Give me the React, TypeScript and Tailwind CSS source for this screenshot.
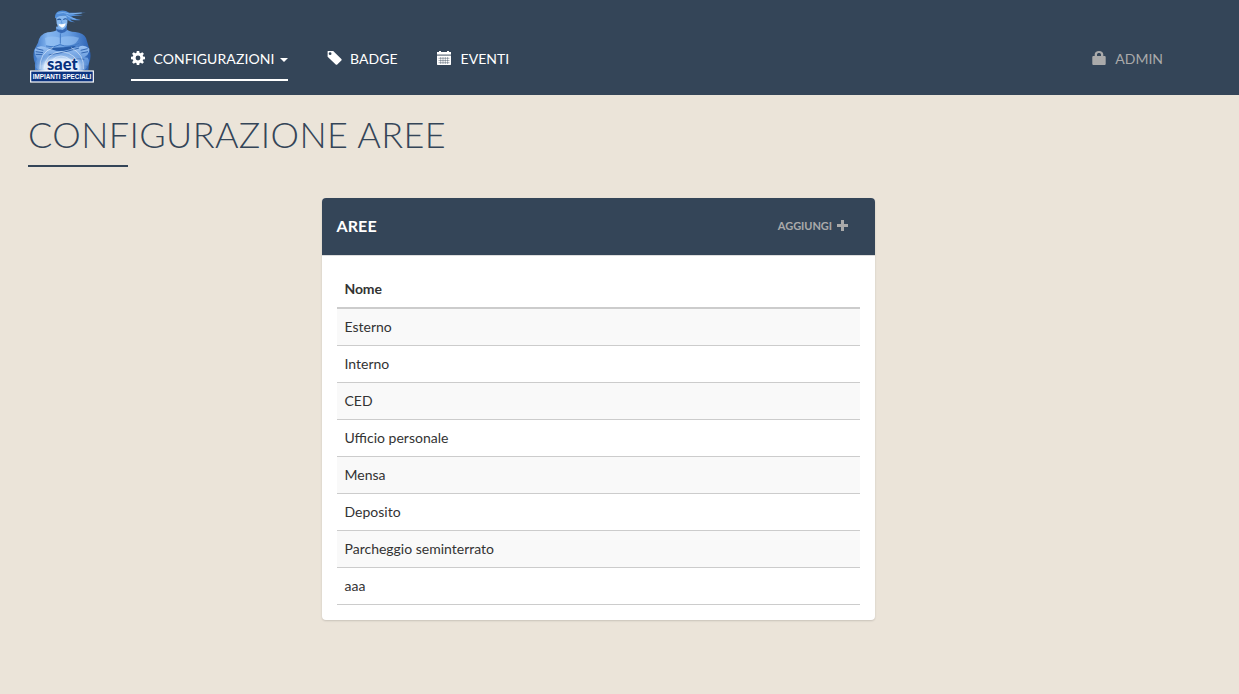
import React from "react";

const areas = [
  "Esterno",
  "Interno",
  "CED",
  "Ufficio personale",
  "Mensa",
  "Deposito",
  "Parcheggio seminterrato",
  "aaa",
];

function Logo() {
  return (
    <svg className="ml-[30px] mt-[9px] h-[74px] w-[64px] shrink-0 overflow-visible" viewBox="31 27 192 222" aria-label="Saet Impianti Speciali">
      <defs>
        <linearGradient id="torso" x1="0" y1="0" x2="1" y2="0">
          <stop offset="0" stopColor="#3a75c6" />
          <stop offset="0.25" stopColor="#84b5ef" />
          <stop offset="0.6" stopColor="#6aa0e3" />
          <stop offset="1" stopColor="#2a60b2" />
        </linearGradient>
        <linearGradient id="arm" x1="0" y1="0" x2="0" y2="1">
          <stop offset="0" stopColor="#9cc4f4" />
          <stop offset="1" stopColor="#4c84d0" />
        </linearGradient>
        <radialGradient id="glow" cx="0.5" cy="0.7" r="0.5">
          <stop offset="0" stopColor="#ffffff" />
          <stop offset="0.6" stopColor="#d8e8fb" />
          <stop offset="1" stopColor="#7faee6" stopOpacity="0" />
        </radialGradient>
      </defs>
      <path d="M109 80 L110 91 Q104 96 84 97 Q60 102 55 128 L43 151 Q39 172 46 190 L46 211 H206 L208 190 Q217 170 209 147 L199 114 Q192 99 167 96 Q145 95 141 88 L141 74Z" fill="url(#torso)" />
      <path d="M110 86 Q126 96 141 76 L142 91 Q136 98 125 100 Q113 97 110 91Z" fill="#3468b5" />
      <path d="M76 114 Q95 106 121 113 Q145 105 178 113 Q174 130 151 136 Q132 141 122 131 Q105 143 79 136Z" fill="#9ac5f5" opacity="0.6" />
      <path d="M122 100 V131 M79 138 Q103 145 121 134 Q148 145 178 130" fill="none" stroke="#4079c5" strokeWidth="3" />
      <path d="M78 143 Q120 145 170 137 L151 151 Q120 155 90 151Z" fill="#285da9" />
      <path d="M46 147 Q59 133 77 142 Q98 148 141 165 L204 173 Q212 185 204 197 L137 190 L53 176Q42 162 46 147Z" fill="url(#arm)" />
      <path d="M209 146 Q193 132 177 141 L85 166 Q50 171 49 186 Q57 199 79 193 L184 175 Q210 168 209 146Z" fill="url(#arm)" />
      <path d="M50 146 l21 5 M48 155 l22 3 M48 163 l20 1 M183 151 l21 -5 M185 159 l20 -4 M87 165 Q135 158 178 144 M145 174 L194 178" fill="none" stroke="#3165b0" strokeWidth="3" />
      <ellipse cx="125" cy="185" rx="84" ry="44" fill="url(#glow)" />
      <path d="M61 207 Q58 158 101 142 M73 207 Q76 159 124 155 Q174 158 178 207 M91 203 Q91 172 124 168 Q157 171 161 203 M191 207 Q195 163 154 143" fill="none" stroke="#edf6ff" strokeWidth="2.5" opacity="0.65" />
      <path d="M109 48 Q122 45 144 46 L143 69 Q140 85 128 90 Q115 85 111 70Z" fill="#88b9ef" />
      <path d="M106 55 Q105 39 117 34 Q132 28 149 38 L199 38 L160 43 L190 46 L154 49 Q163 57 184 60 Q160 62 151 57 Q154 64 166 67 Q148 67 143 57 L139 47 Q119 44 109 54Z" fill="#508dd8" />
      <path d="M113 40 Q131 34 149 42 L186 39 M140 45 Q152 54 168 58" fill="none" stroke="#8abcf0" strokeWidth="2.5" />
      <path d="M113 59 Q120 55 124 60 M131 59 Q137 54 142 58" fill="none" stroke="#225397" strokeWidth="3.5" />
      <path d="M127 60 L124 69 L129 69" fill="none" stroke="#5290d8" strokeWidth="2" />
      <path d="M116 71 Q126 75 138 70 Q136 82 127 83 Q119 81 116 71Z" fill="#fff" />
      <text x="82" y="211" textLength="92" lengthAdjust="spacingAndGlyphs" fontSize="49" fontWeight="900" fill="#07317f" stroke="#ebf4ff" strokeWidth="3" paintOrder="stroke" className="font-['Lato',sans-serif]">saet</text>
      <rect x="33" y="213" width="188" height="33" fill="#0b3380" stroke="#fff" strokeWidth="3.5" />
      <text x="39" y="238" textLength="176" lengthAdjust="spacingAndGlyphs" fontSize="24" fontWeight="700" fill="#fff" className="font-['Liberation_Sans',sans-serif]">IMPIANTI SPECIALI</text>
    </svg>
  );
}

function Gear() {
  return (
    <svg className="h-3.5 w-3.5" viewBox="0 0 14 14" fill="currentColor">
      <path fillRule="evenodd" d="M5.8 0h2.4l.4 1.9 1 .4L11.3 1.2 12.9 2.8 11.7 4.4l.4 1 1.9.4v2.4l-1.9.4-.4 1 1.2 1.6-1.6 1.6-1.7-1.1-1 .4-.4 1.9H5.8l-.4-1.9-1-.4-1.7 1.1-1.6-1.6 1.2-1.6-.4-1L0 8.2V5.8l1.9-.4.4-1L1.1 2.8l1.6-1.6 1.7 1.1 1-.4zM7 4.6a2.4 2.4 0 1 0 0 4.8 2.4 2.4 0 0 0 0-4.8z" />
    </svg>
  );
}

function Tag() {
  return (
    <svg className="h-3.5 w-[15px]" viewBox="0 0 15 14" fill="currentColor">
      <path fillRule="evenodd" d="M.8 0h5.4L14.6 8.2v1L10 13.8H9L.6 5.7V.4zM3.1 1.3a1.4 1.4 0 1 0 0 2.8 1.4 1.4 0 0 0 0-2.8z" />
    </svg>
  );
}

function Calendar() {
  return (
    <svg className="h-3.5 w-3.5" viewBox="0 0 14 14">
      <path fill="currentColor" d="M0 1h2V0h2v1h6V0h2v1h2v2.5H0zM0 5h14v8.5l-.5.5H.5L0 13.5z" />
      <path fill="#fff" fillOpacity=".45" d="M0 3.5h14V5H0z" />
      <path fill="none" stroke="#344558" strokeOpacity=".7" strokeWidth=".6" d="M1.5 7.3h11M1.5 9.5h11M1.5 11.7h11M3.7 6v7M6 6v7M8.3 6v7M10.6 6v7" />
    </svg>
  );
}

function Lock() {
  return (
    <svg className="h-3.5 w-3.5" viewBox="0 0 14 14" fill="currentColor">
      <path fillRule="evenodd" d="M2.7 5V3.5C2.7 1.4 4.4 0 7 0s4.3 1.4 4.3 3.5V5h1.7l.7.7v7.6l-.7.7H1l-.7-.7V5.7L1 5zM5 5h4V3.7C9 2.6 8.2 2 7 2s-2 .6-2 1.7z" />
    </svg>
  );
}

export default function App() {
  return (
    <div className="min-h-[694px] bg-[#ebe4d9] font-['Lato',sans-serif] text-[14px] leading-5 text-[#333]">
      <nav className="flex h-[95px] bg-[#344558] text-[14px] text-white">
        <Logo />
        <div className="ml-[37px] mt-[49px] flex h-8 w-[157px] border-b-2 border-white">
          <span className="mt-[2px]"><Gear /></span>
          <span className="ml-[8.4px] whitespace-nowrap tracking-[0.1px]">CONFIGURAZIONI</span>
          <span className="ml-auto mt-[9px] h-0 w-0 border-x-4 border-t-4 border-x-transparent border-t-white" />
        </div>
        <div className="ml-[39px] mt-[49px] flex">
          <span className="mt-[2px]"><Tag /></span>
          <span className="ml-[8px] w-12 tracking-[0.08px]">BADGE</span>
        </div>
        <div className="ml-[39px] mt-[49px] flex">
          <span className="mt-[2px]"><Calendar /></span>
          <span className="ml-[9.5px] tracking-[0.05px]">EVENTI</span>
        </div>
        <div className="ml-auto mr-[76px] mt-[49px] flex text-[#aaa]">
          <span className="mt-[2px]"><Lock /></span>
          <span className="ml-[9px]">ADMIN</span>
        </div>
      </nav>

      <header className="ml-[28px] pt-[19px]">
        <h1 className="text-[36px] font-light leading-10 tracking-[0.39px] text-[#344558]">CONFIGURAZIONE AREE</h1>
        <div className="mt-[11px] h-0.5 w-[100px] bg-[#344558]" />
      </header>

      <main className="ml-[322px] mt-[31px] h-[422px] w-[553px] rounded bg-white shadow-[0_1px_2px_rgba(0,0,0,0.15)]">
        <div className="flex h-[58px] items-center justify-between rounded-t border-b border-[#ddd] bg-[#344558] pb-[2px] pl-[14.5px] pr-[27px]">
          <h2 className="text-[16px] font-bold tracking-[0.1px] text-white">AREE</h2>
          <button className="flex items-center gap-[5px] text-[11px] font-bold tracking-[-0.05px] text-[#aaa]">
            AGGIUNGI
            <svg className="h-[11px] w-[11px]" viewBox="0 0 11 11" fill="currentColor">
              <path d="M4 0h3v4h4v3H7v4H4V7H0V4h4z" />
            </svg>
          </button>
        </div>
        <div className="px-[15px] pt-[15px]">
          <table className="w-full border-separate border-spacing-0 text-left">
            <thead>
              <tr>
                <th className="h-[38px] border-b-2 border-[#ccc] py-0 pl-[7.5px] font-bold tracking-[-0.15px]">Nome</th>
              </tr>
            </thead>
            <tbody>
              {areas.map((area) => (
                <tr key={area} className="odd:bg-[#f9f9f9]">
                  <td className="h-[37px] border-b border-[#ccc] py-0 pl-[7.5px]">{area}</td>
                </tr>
              ))}
            </tbody>
          </table>
        </div>
      </main>
    </div>
  );
}
